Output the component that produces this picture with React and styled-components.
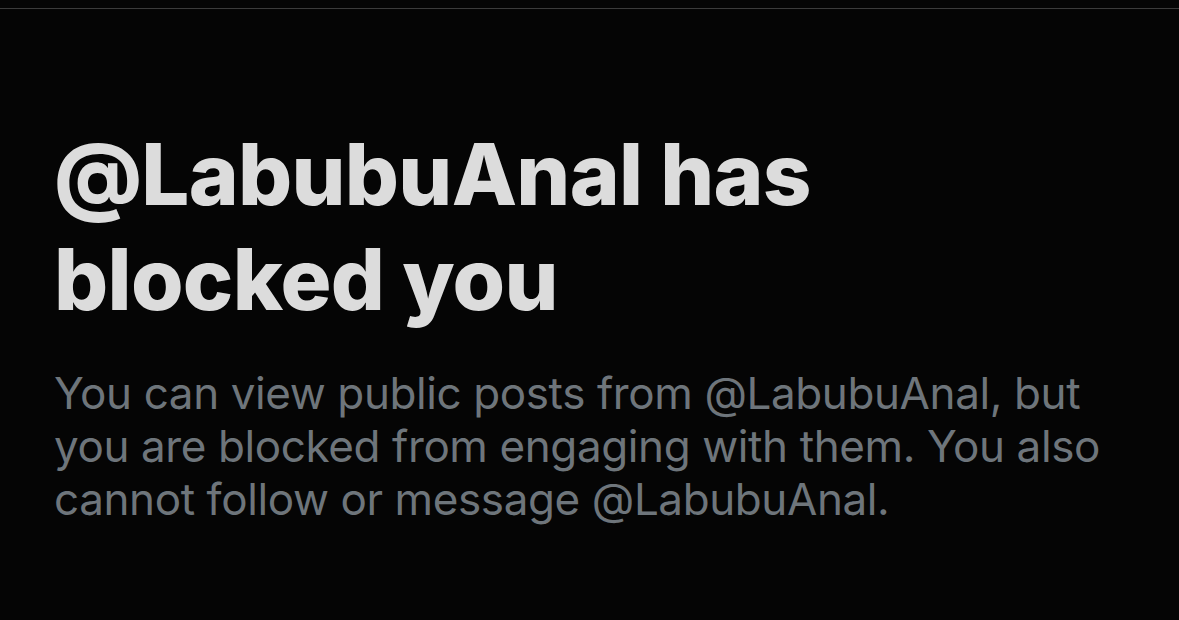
import React from 'react'
import styled,{createGlobalStyle} from 'styled-components'

const GlobalStyle=createGlobalStyle`
  html,body{margin:0;padding:0;background:#050505;}
  body{font-family:Inter,"Noto Sans",sans-serif;-webkit-font-smoothing:antialiased;}
`;

const Screen=styled.div`
  width:1179px;
  height:620px;
  background:#050505;
  overflow:hidden;
  display:flex;
  flex-direction:column;
`;

const TopRule=styled.div`
  height:8px;
  border-bottom:1px solid #3b3b3b;
  flex-shrink:0;
`;

const Content=styled.section`
  padding:113px 0 0 54px;
  display:flex;
  flex-direction:column;
`;

const Title=styled.h1`
  margin:0;
  color:#dcdcdc;
  font-family:Inter,"Noto Sans",sans-serif;
  font-weight:800;
  font-size:85px;
  line-height:105px;
  letter-spacing:-0.7px;
`;

const Body=styled.p`
  margin:35px 0 0;
  color:#6e757b;
  font-family:Inter,"Noto Sans",sans-serif;
  font-weight:400;
  font-size:44px;
  line-height:53px;
  letter-spacing:-0.4px;
`;

const App=()=>{
  const handle='@LabubuAnal'
  return(
    <Screen>
      <GlobalStyle/>
      <TopRule/>
      <Content>
        <Title>{handle} has<br/>blocked you</Title>
        <Body>
          You can view public posts from {handle}, but<br/>
          you are blocked from engaging with them. You also<br/>
          cannot follow or message {handle}.
        </Body>
      </Content>
    </Screen>
  )
}
export default App
